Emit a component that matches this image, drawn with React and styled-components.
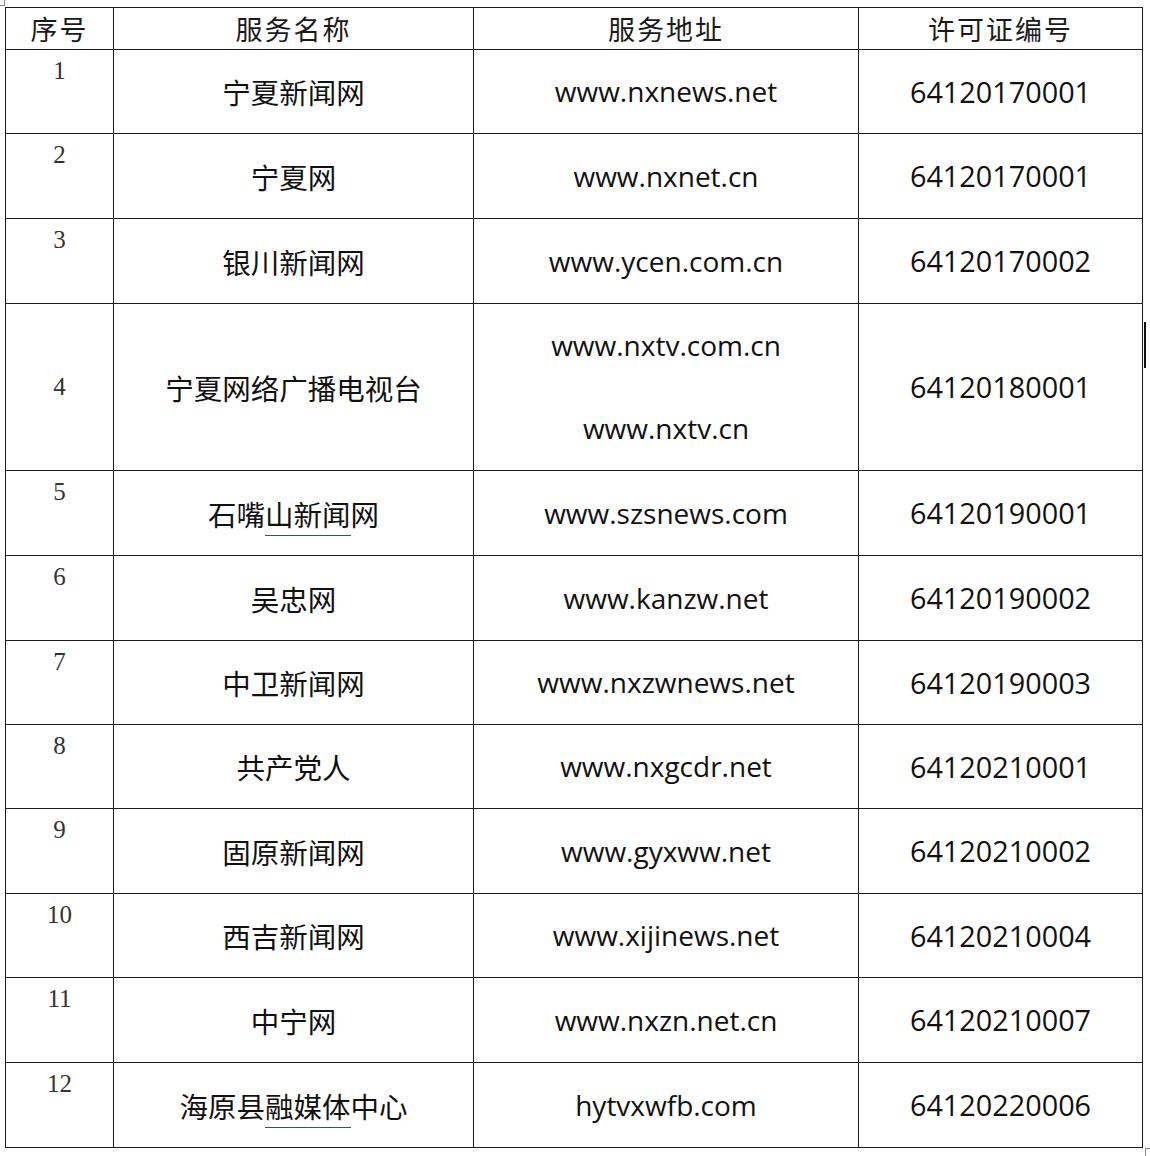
import React from 'react';
import styled, { createGlobalStyle } from 'styled-components';

const Global = createGlobalStyle`
  html, body {
    margin: 0;
    padding: 0;
    background: #fff;
  }
`;

const Page = styled.div`
  position: relative;
  width: 1150px;
  height: 1156px;
  padding: 7px 0 0 5px;
  box-sizing: border-box;
  background: #fff;
`;

const Mark = styled.div`
  position: absolute;
  width: 4px;
  height: 5px;
  border-color: #8a8a8a;
  border-style: solid;
  border-width: 0;
  &.tl {
    left: 0;
    top: 0;
    border-right-width: 1px;
    border-bottom-width: 1px;
  }
  &.br {
    left: 1145px;
    top: 1148px;
    height: 8px;
    border-left-width: 1px;
    border-top-width: 1px;
  }
`;

const Caret = styled.div`
  position: absolute;
  left: 1144px;
  top: 322px;
  width: 2px;
  height: 46px;
  background: #111;
`;

const Table = styled.table`
  border-collapse: collapse;
  table-layout: fixed;
  width: 1137px;
  color: #111;
  td, th {
    border: 1px solid #1c1c1c;
    padding: 0;
    text-align: center;
  }
`;

const HeadCell = styled.th`
  height: 41px;
  font-family: "Noto Sans CJK SC", sans-serif;
  font-weight: 400;
  font-size: 27px;
  letter-spacing: 2px;
  line-height: 1;
  vertical-align: middle;
  color: #1a1a1a;
`;

const Row = styled.tr`
  height: ${p => p.$h}px;
`;

const NumCell = styled.td`
  font-family: "Liberation Serif", "Times New Roman", serif;
  font-size: 25px;
  line-height: 28px;
  color: #333;
  vertical-align: ${p => (p.$middle ? 'middle' : 'top')};
  padding-top: ${p => (p.$middle ? 0 : 7)}px !important;
`;

const NameCell = styled.td`
  font-family: "Noto Sans CJK SC", sans-serif;
  font-size: 28.5px;
  line-height: 1.2;
  vertical-align: middle;
  padding-top: 2px !important;
  u {
    text-decoration: none;
    border-bottom: 1px solid #3a526e;
    padding-bottom: 1px;
  }
`;

const TextCell = styled.td`
  font-family: "Open Sans", "Noto Sans", sans-serif;
  font-size: ${p => p.$size || 28}px;
  line-height: 1.2;
  vertical-align: middle;
  padding-top: 1px !important;
`;

const Lines = styled.div`
  display: flex;
  flex-direction: column;
  align-items: center;
  gap: 49px;
`;

const rows = [
  { n: '1', name: '宁夏新闻网', url: 'www.nxnews.net', lic: '64120170001', h: 84 },
  { n: '2', name: '宁夏网', url: 'www.nxnet.cn', lic: '64120170001', h: 85 },
  { n: '3', name: '银川新闻网', url: 'www.ycen.com.cn', lic: '64120170002', h: 85 },
  { n: '4', name: '宁夏网络广播电视台', url: ['www.nxtv.com.cn', 'www.nxtv.cn'], lic: '64120180001', h: 167, middle: true },
  { n: '5', name: <>石嘴<u>山新闻</u>网</>, url: 'www.szsnews.com', lic: '64120190001', h: 85 },
  { n: '6', name: '吴忠网', url: 'www.kanzw.net', lic: '64120190002', h: 85 },
  { n: '7', name: '中卫新闻网', url: 'www.nxzwnews.net', lic: '64120190003', h: 84 },
  { n: '8', name: '共产党人', url: 'www.nxgcdr.net', lic: '64120210001', h: 84 },
  { n: '9', name: '固原新闻网', url: 'www.gyxww.net', lic: '64120210002', h: 85 },
  { n: '10', name: '西吉新闻网', url: 'www.xijinews.net', lic: '64120210004', h: 84 },
  { n: '11', name: '中宁网', url: 'www.nxzn.net.cn', lic: '64120210007', h: 85 },
  { n: '12', name: <>海原县<u>融媒体</u>中心</>, url: 'hytvxwfb.com', lic: '64120220006', h: 85 },
];

export default function App() {
  return (
    <Page>
      <Global />
      <Mark className="tl" />
      <Mark className="br" />
      <Caret />
      <Table>
        <colgroup>
          <col style={{ width: 108 }} />
          <col style={{ width: 360 }} />
          <col style={{ width: 385 }} />
          <col style={{ width: 284 }} />
        </colgroup>
        <thead>
          <tr>
            <HeadCell>序号</HeadCell>
            <HeadCell>服务名称</HeadCell>
            <HeadCell>服务地址</HeadCell>
            <HeadCell>许可证编号</HeadCell>
          </tr>
        </thead>
        <tbody>
          {rows.map(r => (
            <Row key={r.n} $h={r.h}>
              <NumCell $middle={r.middle}>{r.n}</NumCell>
              <NameCell>{r.name}</NameCell>
              <TextCell>
                {Array.isArray(r.url) ? (
                  <Lines>
                    {r.url.map(u => <span key={u}>{u}</span>)}
                  </Lines>
                ) : r.url}
              </TextCell>
              <TextCell $size={28.8}>{r.lic}</TextCell>
            </Row>
          ))}
        </tbody>
      </Table>
    </Page>
  );
}
